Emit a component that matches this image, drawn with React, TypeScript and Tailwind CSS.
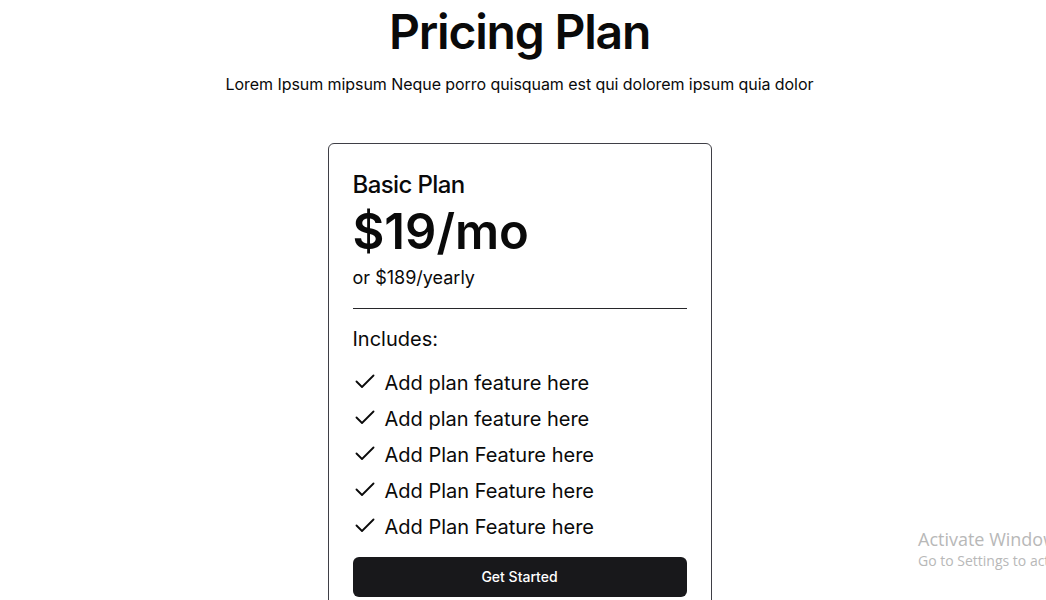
const features = [
  'Add plan feature here',
  'Add plan feature here',
  'Add Plan Feature here',
  'Add Plan Feature here',
  'Add Plan Feature here',
];

function CheckMark() {
  return (
    <svg width="20" height="14" viewBox="0 0 20 14" fill="none" className="shrink-0">
      <path d="M1.5 7.5 7 13 18.5 1.5" stroke="currentColor" strokeWidth="1.8" strokeLinecap="round" strokeLinejoin="round" />
    </svg>
  );
}

export default function App() {
  return (
    <div className="relative min-h-screen bg-white text-[#0a0a0a] font-['Inter',sans-serif] overflow-hidden">
      <div className="flex flex-col items-center pr-[7px]">
        <h1 className="text-5xl font-semibold leading-[64px] tracking-tight">Pricing Plan</h1>
        <p className="mt-2 text-base tracking-[-0.004em]">Lorem Ipsum mipsum Neque porro quisquam est qui dolorem ipsum quia dolor</p>

        <div className="mt-[47px] w-[384px] rounded-md border border-[#3f3f46] px-6 pb-6 pt-[25px]">
          <h2 className="text-2xl font-medium tracking-tight">Basic Plan</h2>
          <div className="mt-[3px] text-[49px] font-semibold leading-[56px]">$19/mo</div>
          <div className="mt-1 text-lg">or $189/yearly</div>
          <hr className="mt-4 border-t border-[#27272a]" />
          <div className="mt-4 text-xl">Includes:</div>
          <ul className="mt-3 flex flex-col">
            {features.map((f, i) => (
              <li key={i} className="flex h-9 items-center gap-2.5 text-xl">
                <span className="ml-0.5 flex -translate-y-0.5">
                  <CheckMark />
                </span>
                <span>{f}</span>
              </li>
            ))}
          </ul>
          <button className="mt-3 flex h-10 w-full items-center justify-center rounded-md bg-[#18181b] text-sm font-medium text-white">
            Get Started
          </button>
        </div>
      </div>

      <div className="absolute left-[918px] top-[527px] font-['Open_Sans',sans-serif] text-[#b8b8b8] whitespace-nowrap">
        <div className="text-lg leading-6">Activate Windows</div>
        <div className="text-sm">Go to Settings to activate Windows.</div>
      </div>
    </div>
  );
}
